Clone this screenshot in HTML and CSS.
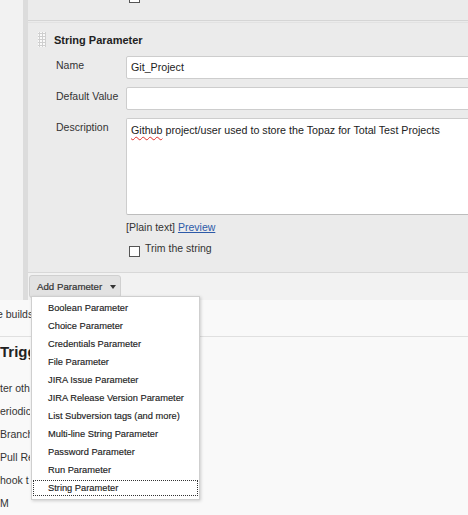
FILE: index.html
```html
<!DOCTYPE html>
<html lang="en">
<head>
<meta charset="utf-8">
<title>String Parameter</title>
<link rel="stylesheet" href="styles.css">
</head>
<body>
<div class="top">
  <div class="gutter"></div>
  <div class="main">
    <div class="prev-panel">
      <div class="trim-row"><span class="checkbox"></span><span class="trim-label">Trim the string</span></div>
    </div>
    <div class="param-panel">
      <div class="param-head">
        <svg class="handle" width="8" height="15" viewBox="0 0 8 15" aria-hidden="true">
          <rect x="0" y="0" width="8" height="15" fill="#fafafa"/>
          <g fill="#cfcfcf">
            <rect x="0" y="1" width="8" height="1"/><rect x="0" y="4" width="8" height="1"/>
            <rect x="0" y="7" width="8" height="1"/><rect x="0" y="10" width="8" height="1"/>
            <rect x="0" y="13" width="8" height="1"/>
            <rect x="1" y="0" width="1" height="15"/><rect x="4" y="0" width="1" height="15"/>
            <rect x="7" y="0" width="1" height="15"/>
          </g>
        </svg>
        <span class="title">String Parameter</span>
      </div>
      <div class="form">
        <div class="label">Name</div>
        <div class="input">Git_Project</div>
        <div class="label">Default Value</div>
        <div class="input"></div>
        <div class="label">Description</div>
        <div class="textarea"><span class="misspelt">Github</span> project/user used to store the Topaz for Total Test Projects</div>
        <div></div>
        <div class="below">
          <div class="format">[Plain text] <a class="preview" href="#">Preview</a></div>
          <div class="trim-row main-trim"><span class="checkbox"></span><span class="trim-label">Trim the string</span></div>
        </div>
      </div>
    </div>
    <div class="actions">
      <button class="add-btn" type="button">Add Parameter
        <svg class="caret" width="6" height="4" viewBox="0 0 6 4" aria-hidden="true"><path d="M0 0h6L3 4z" fill="#333"/></svg>
      </button>
    </div>
  </div>
</div>
<div class="lower">
  <div class="line first clip">e builds</div>
  <div class="sep"></div>
  <div class="heading clip">Trigg</div>
  <div class="opts">
    <div class="opt clip">ter oth</div>
    <div class="opt clip">eriodica</div>
    <div class="opt clip">Branch</div>
    <div class="opt clip">Pull Re</div>
    <div class="opt clip">hook t</div>
    <div class="opt clip">M</div>
  </div>
</div>
<ul class="menu">
  <li>Boolean Parameter</li>
  <li>Choice Parameter</li>
  <li>Credentials Parameter</li>
  <li>File Parameter</li>
  <li>JIRA Issue Parameter</li>
  <li>JIRA Release Version Parameter</li>
  <li>List Subversion tags (and more)</li>
  <li>Multi-line String Parameter</li>
  <li>Password Parameter</li>
  <li>Run Parameter</li>
  <li class="focused">String Parameter</li>
</ul>
</body>
</html>
```
FILE: styles.css
```css
html, body {
  margin: 0;
  padding: 0;
  overflow: hidden;
  width: 468px;
  height: 515px;
}
body {
  background: #f9f9f9;
  font-family: "Liberation Sans", Arial, sans-serif;
  color: #333;
  font-size: 10.5px;
  position: relative;
}
.top {
  display: flex;
  background: #f2f2f2;
  height: 300px;
}
.gutter {
  width: 23px;
  flex: none;
}
.main {
  flex: 1;
  min-width: 0;
  border-left: 5px solid #dcdcdc;
  background: #ebebeb;
  overflow: hidden;
  display: flex;
  flex-direction: column;
}
.prev-panel {
  height: 20px;
  border-bottom: 1px solid #d5d5d5;
  overflow: hidden;
  display: flex;
  align-items: flex-end;
  padding-left: 101px;
}
.trim-row {
  display: flex;
  align-items: flex-start;
  gap: 5px;
  height: 11px;
}
.prev-panel .trim-row {
  margin-bottom: 17px;
}
.checkbox {
  width: 9px;
  height: 9px;
  border: 1px solid #555;
  background: #fff;
  flex: none;
}
.trim-label {
  line-height: 13px;
  margin-top: -4px;
}
.param-panel {
  margin-top: 1px;
  border-top: 1px solid #e2e2e2;
  border-bottom: 1px solid #d8d8d8;
  padding: 9px 0 15px 0;
}
.param-head {
  display: flex;
  align-items: center;
  gap: 8px;
  padding-left: 10px;
  height: 15px;
}
.handle { display: block; }
.title {
  font-weight: bold;
  font-size: 11px;
  color: #222;
}
.form {
  display: grid;
  grid-template-columns: 70px 380px;
  row-gap: 8px;
  margin-top: 9px;
  padding-left: 28px;
}
.label {
  padding-top: 3px;
  line-height: 13px;
}
.input {
  height: 21px;
  line-height: 21px;
  border: 1px solid #cdcdcd;
  border-radius: 2px;
  background: #fff;
  padding-left: 4px;
  color: #222;
  font-size: 10.7px;
}
.textarea {
  height: 90px;
  border: 1px solid #cdcdcd;
  border-bottom-color: #bdbdbd;
  border-radius: 2px;
  background: #fff;
  padding: 5px 4px 0;
  line-height: 13px;
  color: #222;
  font-size: 10.7px;
}
.misspelt {
  text-decoration: underline wavy #e0302a;
  text-decoration-thickness: 1px;
  text-underline-offset: 2px;
}
.below {
  margin-top: -2px;
}
.format {
  line-height: 13px;
}
.preview {
  color: #2d5aa8;
  text-decoration: underline;
}
.main-trim {
  margin-top: 12px;
  padding-left: 3px;
}
.actions {
  background: #f2f2f2;
  flex: 1;
  padding: 2px 0 0 1px;
}
.add-btn {
  display: flex;
  align-items: center;
  gap: 8px;
  height: 23px;
  width: 92px;
  padding: 0 0 0 7px;
  margin: 0;
  border: 1px solid #d0d0d0;
  border-radius: 3px;
  background: #e2e2e2;
  font-family: "Liberation Sans", Arial, sans-serif;
  font-size: 9.7px;
  color: #333;
  -webkit-text-stroke: 0.2px #333;
}
.caret { display: block; }
.lower {
  padding-top: 8px;
}
.clip {
  width: 30px;
  overflow: hidden;
  white-space: nowrap;
}
.line {
  line-height: 13px;
  margin-left: -3px;
  width: 34px;
}
.sep {
  margin-top: 15px;
  border-top: 1px solid #e0e0e0;
}
.heading {
  font-weight: bold;
  font-size: 15px;
  line-height: 18px;
  margin-top: 6px;
  color: #222;
}
.opts {
  margin-top: 21px;
}
.opt {
  height: 23px;
  line-height: 13px;
}
.menu {
  position: absolute;
  left: 31px;
  top: 296px;
  width: 167px;
  margin: 0;
  padding: 2px 0;
  list-style: none;
  background: #fff;
  border: 1px solid #cfcfcf;
  box-shadow: 1px 1px 3px rgba(0,0,0,0.18);
  font-size: 9.3px;
  color: #222;
}
.menu li {
  height: 18px;
  line-height: 18px;
  padding-left: 16px;
  white-space: nowrap;
  -webkit-text-stroke: 0.15px #222;
}
.menu li.focused {
  outline: 1px dotted #333;
  outline-offset: -2px;
}
```
